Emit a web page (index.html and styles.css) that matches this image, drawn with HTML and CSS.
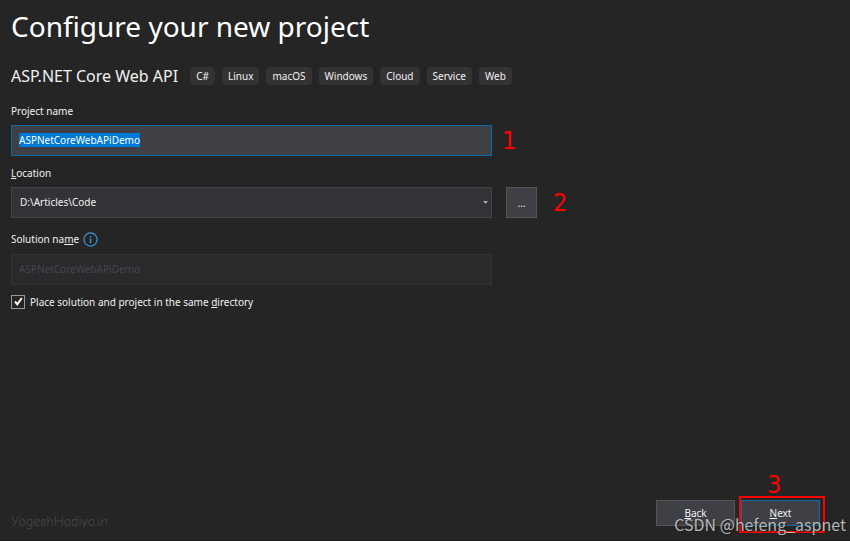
FILE: index.html
```html
<!DOCTYPE html>
<html lang="en">
<head>
    <meta charset="UTF-8">
    <meta name="viewport" content="width=device-width, initial-scale=1.0">
    <title>Configure your new project</title>
    <link rel="stylesheet" href="styles.css">
</head>
<body>
    <main class="dialog">
        <h1 class="title">Configure your new project</h1>

        <div class="template">
            <h2 class="template-name">ASP.NET Core Web API</h2>
            <ul class="tags">
                <li>C#</li>
                <li>Linux</li>
                <li>macOS</li>
                <li>Windows</li>
                <li>Cloud</li>
                <li>Service</li>
                <li>Web</li>
            </ul>
        </div>

        <form class="form" id="projectForm">
            <div class="field">
                <label for="projectName">Project name</label>
                <div class="field-row">
                    <input class="box project-name" type="text" id="projectName" value="ASPNetCoreWebAPiDemo" spellcheck="false" autocomplete="off">
                    <span class="step">1</span>
                </div>
            </div>

            <div class="field">
                <label for="location"><u>L</u>ocation</label>
                <div class="field-row">
                    <div class="select-wrap">
                        <select class="box location" id="location">
                            <option>D:\Articles\Code</option>
                        </select>
                        <svg class="arrow" width="5" height="3" viewBox="0 0 5 3"><path d="M0 0h5L2.500 3z" fill="#a8a8a8"/></svg>
                    </div>
                    <button class="browse" type="button" aria-label="Browse">...</button>
                    <span class="step step-browse">2</span>
                </div>
            </div>

            <div class="field">
                <div class="label-row">
                    <label for="solutionName">Solution na<u>m</u>e</label>
                    <svg class="info" width="15" height="15" viewBox="0 0 15 15">
                        <circle cx="7.500" cy="7.500" r="6.600" fill="none" stroke="#3a96dd" stroke-width="1.200"/>
                        <path d="M7.500 4v1.500M7.500 6.500v4.500" stroke="#3a96dd" stroke-width="1.400"/>
                    </svg>
                </div>
                <div class="field-row">
                    <input class="box solution-name" type="text" id="solutionName" value="ASPNetCoreWebAPiDemo" disabled>
                </div>
            </div>

            <div class="check-row">
                <span class="check-wrap">
                    <input class="check" type="checkbox" id="sameDirectory" checked>
                    <svg class="tick" width="9" height="9" viewBox="0 0 9 9"><path d="M1 4.500L3.300 7.300L7.800 1" fill="none" stroke="#fff" stroke-width="2"/></svg>
                </span>
                <label for="sameDirectory">Place solution and project in the same <u>d</u>irectory</label>
            </div>
        </form>

        <footer class="footer">
            <span class="author">YogeshHadiya.in</span>
            <div class="actions">
                <button class="action" type="button"><u>B</u>ack</button>
                <div class="highlight">
                    <span class="step step-next">3</span>
                    <button class="action action-next" type="submit" form="projectForm"><u>N</u>ext</button>
                </div>
            </div>
            <span class="watermark">CSDN @hefeng_aspnet</span>
        </footer>
    </main>

    <script>
        // Start with the suggested name selected so it can be typed over
        const projectName = document.getElementById('projectName');
        projectName.focus();
        projectName.select();

        document.getElementById('projectForm').addEventListener('submit', (e) => {
            e.preventDefault();
        });
    </script>
</body>
</html>
```
FILE: styles.css
```css
:root {
    --bg-color: #252526;
    --text-color: #f1f1f1;
    --box-color: #333337;
    --button-color: #3f3f46;
    --border-color: #434346;
    --button-border: #555555;
    --accent-color: #0e69a8;
    --mark-color: #ff0000;
    --field-width: 481px;
}

* {
    box-sizing: border-box;
}

body {
    margin: 0;
    background: var(--bg-color);
    color: var(--text-color);
    font-family: "Segoe UI", "Noto Sans", sans-serif;
    font-size: 10px;
    line-height: 16px;
}

.dialog {
    display: flex;
    flex-direction: column;
    min-height: 100vh;
    padding: 6px 25px 7px 11px;
    border-bottom: 1px solid #1b1b1c;
}

.title {
    margin: 0;
    font-size: 28px;
    font-weight: normal;
    line-height: 40px;
    color: #ffffff;
}

.template {
    display: flex;
    align-items: center;
    gap: 12px;
    margin-top: 20px;
}

.template-name {
    margin: 0;
    font-size: 16px;
    font-weight: normal;
    line-height: 20px;
}

.tags {
    display: flex;
    flex-wrap: wrap;
    gap: 7px;
    margin: 0;
    padding: 0;
    list-style: none;
}

.tags li {
    padding: 0 6px;
    border-radius: 4px;
    background: #333334;
    line-height: 18px;
}

.form {
    display: flex;
    flex-direction: column;
    margin-top: 17px;
}

.field {
    display: flex;
    flex-direction: column;
    gap: 6px;
    margin-bottom: 9px;
}

.field-row {
    display: flex;
    align-items: center;
}

.label-row {
    display: flex;
    align-items: center;
    gap: 4px;
    margin: 4px 0 1px;
}

.box {
    width: 100%;
    height: 31px;
    padding: 0 7px 1px;
    border: 1px solid var(--border-color);
    border-radius: 0;
    outline: none;
    background: var(--box-color);
    color: var(--text-color);
    font: inherit;
}

input.box {
    max-width: var(--field-width);
}

.project-name {
    border-color: var(--accent-color);
    background: var(--button-color);
}

.project-name::selection {
    background: #0078d7;
    color: #ffffff;
}

.select-wrap {
    position: relative;
    flex: 0 1 var(--field-width);
}

.location {
    display: block;
    padding: 0 8px 1px;
    appearance: none;
}

.arrow {
    position: absolute;
    top: 14px;
    right: 4px;
    pointer-events: none;
}

.browse {
    width: 31px;
    height: 31px;
    margin-left: 14px;
    padding: 0;
    border: 1px solid var(--button-border);
    background: var(--button-color);
    color: var(--text-color);
    font: inherit;
}

.solution-name {
    border-color: #333337;
    background: #2a2a2c;
    color: #46464a;
}

.step {
    margin-left: 10px;
    color: var(--mark-color);
    font-family: "DejaVu Sans Condensed", "DejaVu Sans", sans-serif;
    font-size: 25px;
    line-height: 26px;
}

.step-browse {
    margin-left: 16px;
}

.check-row {
    display: flex;
    align-items: center;
    gap: 5px;
}

.check-wrap {
    position: relative;
    display: flex;
}

.check {
    width: 14px;
    height: 14px;
    margin: 0;
    appearance: none;
    border: 1px solid #999999;
    background: var(--bg-color);
}

.tick {
    position: absolute;
    top: 2px;
    left: 3px;
    pointer-events: none;
}

.check:not(:checked) + .tick {
    display: none;
}

.footer {
    position: relative;
    display: flex;
    align-items: flex-end;
    justify-content: space-between;
    margin-top: auto;
}

.author {
    color: #444446;
    font-family: "Comic Sans MS", "Comic Neue", "Open Sans", sans-serif;
    font-size: 14px;
    line-height: 22px;
}

.actions {
    display: flex;
    align-items: flex-start;
    gap: 4px;
}

.action {
    width: 79px;
    height: 26px;
    margin-top: 4px;
    padding: 0;
    border: 1px solid var(--button-border);
    background: var(--button-color);
    color: var(--text-color);
    font: inherit;
}

.action-next {
    display: block;
    margin: 0;
    border-color: var(--accent-color);
}

.highlight {
    position: relative;
    padding: 2px 3px 5px 0;
    border: 2px solid var(--mark-color);
}

.step-next {
    position: absolute;
    bottom: 100%;
    left: 26px;
    margin: 0;
}

.watermark {
    position: absolute;
    right: -21px;
    bottom: -1px;
    color: rgba(220, 220, 220, 0.800);
    font-family: "Noto Sans CJK SC", sans-serif;
    font-size: 16px;
    line-height: 20px;
    text-shadow: 1px 1px 1px #222222;
    white-space: nowrap;
    pointer-events: none;
}
```
